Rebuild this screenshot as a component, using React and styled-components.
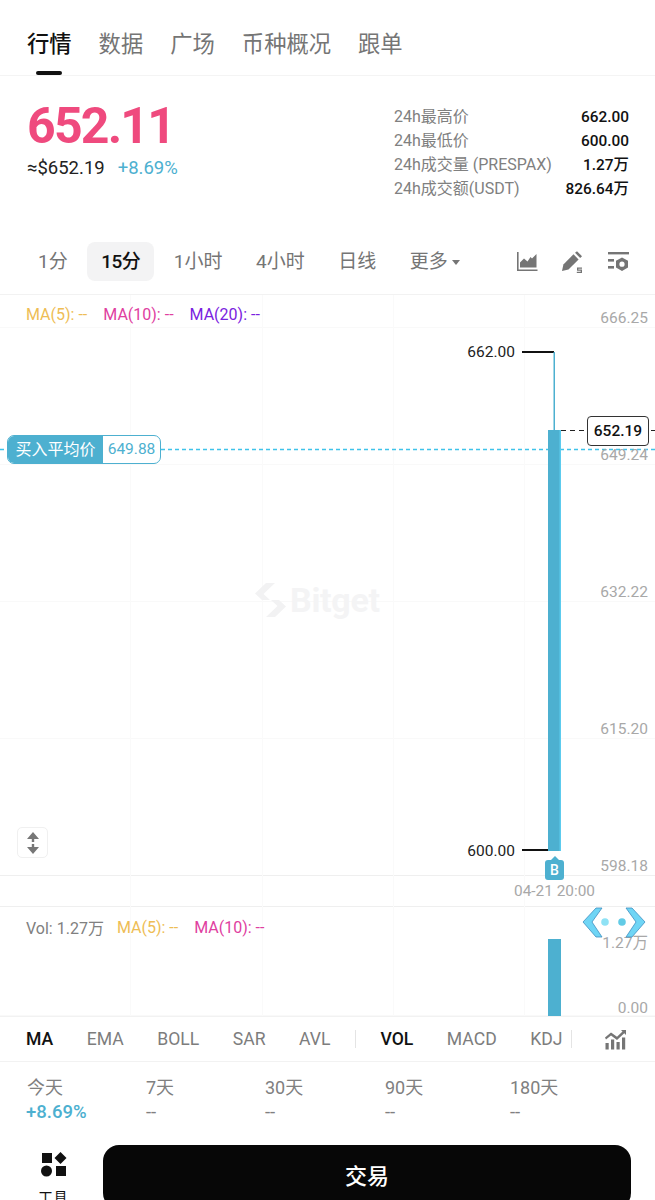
import React from "react";
import styled, { createGlobalStyle } from "styled-components";

const FONT = `Roboto, "Noto Sans CJK SC", "Noto Sans", sans-serif`;
const TEAL = "#4db0d0";
const TOP = 294;

const Global = createGlobalStyle`
  html, body { margin: 0; padding: 0; background: #fff; }
  body { width: 655px; height: 1200px; overflow: hidden; font-family: ${FONT}; }
  * { box-sizing: border-box; }
`;

const Page = styled.div`
  width: 655px;
  height: 1200px;
  overflow: hidden;
  display: flex;
  flex-direction: column;
  background: #fff;
`;

const TabBar = styled.nav`
  height: 76px;
  padding: 25px 0 0 27px;
  display: flex;
  gap: 27px;
  border-bottom: 1px solid #f4f4f4;
  flex: none;
`;
const Tab = styled.div`
  position: relative;
  font-size: 22.3px;
  line-height: 38px;
  height: 50px;
  color: ${(p) => (p.$active ? "#111" : "#757575")};
  font-weight: ${(p) => (p.$active ? 500 : 400)};
  ${(p) =>
    p.$active &&
    `&::after { content: ""; position: absolute; left: 9px; bottom: 0; width: 26px; height: 4px; border-radius: 2px; background: #111; }`}
`;

const Summary = styled.section`
  height: 165px;
  flex: none;
  display: flex;
  justify-content: space-between;
  padding: 29px 26px 0 27px;
`;
const PriceBlock = styled.div`
  display: flex;
  flex-direction: column;
`;
const BigPrice = styled.div`
  font-size: 50px;
  line-height: 46px;
  margin-top: -2px;
  font-weight: 700;
  color: #ef4a7e;
  letter-spacing: -1.8px;
`;
const PriceSub = styled.div`
  margin-top: 7px;
  display: flex;
  gap: 13px;
  font-size: 18.5px;
  line-height: 24px;
  color: #222;
`;
const Up = styled.span`
  color: ${TEAL};
`;
const Stats = styled.div`
  display: grid;
  grid-template-columns: 1fr auto;
  align-content: start;
  column-gap: 8px;
  width: 235px;
  font-size: 16px;
  line-height: 24px;
`;
const StatLabel = styled.span`
  color: #808080;
  white-space: nowrap;
`;
const StatValue = styled.span`
  color: #111;
  font-size: 15.4px;
  font-weight: 500;
  text-align: right;
  white-space: nowrap;
`;

const Intervals = styled.div`
  height: 53px;
  flex: none;
  padding: 1px 26px 0 24px;
  display: flex;
  align-items: flex-start;
  gap: 5.5px;
`;
const Interval = styled.div`
  height: 39px;
  line-height: 39px;
  padding: 0 14px;
  border-radius: 8px;
  font-size: 19px;
  color: ${(p) => (p.$active ? "#111" : "#757575")};
  font-weight: ${(p) => (p.$active ? 500 : 400)};
  letter-spacing: ${(p) => (p.$active ? "-0.5px" : "0")};
  background: ${(p) => (p.$active ? "#f3f3f4" : "transparent")};
  white-space: nowrap;
`;
const Caret = styled.span`
  display: inline-block;
  margin-left: 4px;
  vertical-align: 3px;
  border-left: 4.5px solid transparent;
  border-right: 4.5px solid transparent;
  border-top: 5px solid #757575;
`;
const ToolIcons = styled.div`
  margin-left: auto;
  height: 39px;
  display: flex;
  align-items: center;
  gap: 23px;
`;

const Canvas = styled.div`
  position: relative;
  height: 722px;
  flex: none;
  border-top: 1px solid #f2f2f2;
  overflow: hidden;
`;
const Drawing = styled.svg`
  position: absolute;
  left: 0;
  top: -1px;
`;
const Legend = styled.div`
  position: absolute;
  left: 26px;
  top: ${(p) => p.$y - TOP - 1}px;
  height: 20px;
  display: flex;
  align-items: center;
  gap: 16px;
  font-size: 16px;
  white-space: nowrap;
`;
const LegendItem = styled.span`
  color: ${(p) => p.$color};
  margin-right: ${(p) => (p.$tight ? "-3px" : "0")};
`;
const AxisLabel = styled.div`
  position: absolute;
  right: 7px;
  top: ${(p) => p.$y - TOP - 10}px;
  line-height: 20px;
  font-size: 15.5px;
  color: #a8a8a8;
  white-space: nowrap;
`;
const TimeLabel = styled.div`
  position: absolute;
  left: 514px;
  top: ${891 - TOP - 11}px;
  line-height: 20px;
  font-size: 15.4px;
  color: #a8a8a8;
  white-space: nowrap;
`;
const ExtremeLabel = styled.div`
  position: absolute;
  right: 140px;
  top: ${(p) => p.$y - TOP - 11}px;
  line-height: 20px;
  font-size: 15.5px;
  color: #222;
`;
const LastPrice = styled.div`
  position: absolute;
  left: 587px;
  top: ${416 - TOP - 1}px;
  width: 62px;
  height: 30px;
  line-height: 28px;
  text-align: center;
  background: #fff;
  border: 1px solid #333;
  border-radius: 4px;
  font-size: 15.5px;
  font-weight: 500;
  color: #111;
`;
const AvgTag = styled.div`
  position: absolute;
  left: 7px;
  top: ${435 - TOP - 1}px;
  width: 154px;
  height: 29px;
  display: flex;
  border: 1px solid ${TEAL};
  border-radius: 7px;
  overflow: hidden;
  background: #fff;
  font-size: 16px;
  line-height: 27px;
`;
const AvgName = styled.span`
  width: 95px;
  background: ${TEAL};
  color: #fff;
  text-align: center;
`;
const AvgValue = styled.span`
  flex: 1;
  color: ${TEAL};
  font-size: 15.5px;
  text-align: center;
`;
const ScaleButton = styled.div`
  position: absolute;
  left: 17px;
  top: ${827 - TOP - 1}px;
  width: 31px;
  height: 31px;
  border: 1px solid #f0f0f0;
  border-radius: 5px;
  display: flex;
  align-items: center;
  justify-content: center;
  background: #fff;
`;
const BuyMark = styled.div`
  position: absolute;
  left: 545px;
  top: ${860 - TOP - 1}px;
  width: 19px;
  height: 20px;
  background: ${TEAL};
  border-radius: 3px;
  color: #fff;
  font-size: 14px;
  font-weight: 500;
  line-height: 20px;
  text-align: center;
  &::before {
    content: "";
    position: absolute;
    left: 5.5px;
    top: -4px;
    border-left: 4px solid transparent;
    border-right: 4px solid transparent;
    border-bottom: 4px solid ${TEAL};
  }
`;
const Watermark = styled.div`
  position: absolute;
  left: 255px;
  top: ${582 - TOP - 1}px;
  height: 36px;
  display: flex;
  align-items: center;
  gap: 4px;
  font-size: 34px;
  font-weight: 700;
  color: #f4f4f5;
  letter-spacing: -0.3px;
`;
const Floater = styled.svg`
  position: absolute;
  left: 582px;
  top: ${906 - TOP - 1}px;
`;

const Indicators = styled.div`
  height: 46px;
  flex: none;
  padding-left: 26px;
  display: flex;
  align-items: center;
  gap: 33.5px;
  border-top: 1px solid #f2f2f2;
  border-bottom: 1px solid #f2f2f2;
`;
const Indicator = styled.span`
  font-size: 17.6px;
  color: ${(p) => (p.$active ? "#111" : "#7d7d7d")};
  font-weight: ${(p) => (p.$active ? 500 : 400)};
`;
const Divider = styled.i`
  width: 1px;
  height: 18px;
  background: #e4e4e4;
  margin-left: ${(p) => p.$left}px;
  margin-right: ${(p) => p.$right}px;
`;

const Periods = styled.div`
  height: 83px;
  flex: none;
  padding: 14px 0 0 27px;
  display: grid;
  grid-template-columns: 119px 119px 120px 125px auto;
`;
const Period = styled.div`
  display: flex;
  flex-direction: column;
`;
const PeriodName = styled.span`
  font-size: 18px;
  line-height: 24px;
  color: #808080;
`;
const PeriodValue = styled.span`
  font-size: 18.5px;
  line-height: 24px;
  color: ${(p) => (p.$up ? TEAL : "#808080")};
  font-weight: ${(p) => (p.$up ? 500 : 400)};
  margin-left: ${(p) => (p.$up ? "-1px" : "0")};
`;

const Footer = styled.div`
  height: 70px;
  flex: none;
  display: flex;
  padding-left: 38px;
`;
const ToolEntry = styled.div`
  width: 65px;
  padding-top: 7px;
  display: flex;
  flex-direction: column;
  align-items: flex-start;
  gap: 11px;
  font-size: 15px;
  line-height: 20px;
  color: #111;
`;
const ToolGlyph = styled.svg`
  margin-left: 3px;
  flex: none;
`;
const TradeButton = styled.div`
  width: 528px;
  height: 64px;
  background: #070707;
  color: #fff;
  border-radius: 16px;
  font-size: 22px;
  font-weight: 500;
  line-height: 64px;
  text-align: center;
`;

const AreaIcon = () => (
  <svg width="22" height="21" viewBox="0 0 22 21" fill="#757575">
    <path d="M1 1h1.6v17.4H21.5V20H1z" />
    <path d="M4 16.5v-5l4-4 3.5 3 3-4.5 1.5 1.5L20.5 3v13.5z" />
  </svg>
);
const PenIcon = () => (
  <svg width="24" height="22" viewBox="0 0 24 22" fill="#757575">
    <path d="M1 20l1.4-6.6L12.5 3.300 17.600 8.400 7.500 18.500z" />
    <path d="M14 1.800l2-1.600 5 5-1.800 1.800z" />
    <path d="M16 16.500h5v1.300h-3.700v.8H21V22h-5.200v-1.300h3.900v-.9H16z" />
  </svg>
);
const SettingsIcon = () => (
  <svg width="21" height="21" viewBox="0 0 21 21" fill="#757575">
    <rect x="0" y="1" width="21" height="2.400" />
    <rect x="0" y="8" width="6" height="2.600" />
    <rect x="0" y="15" width="6" height="2.600" />
    <path fillRule="evenodd" d="M14 6.500l6 3.300v6.800l-6 3.400-6-3.400V9.800zM14 10.600a2.600 2.600 0 1 0 0 5.200 2.600 2.600 0 0 0 0-5.200z" />
  </svg>
);
const ScaleIcon = () => (
  <svg width="14" height="22" viewBox="0 0 14 22" fill="#777">
    <path d="M7 0l6 7H8.200v3H5.800V7H1z" />
    <path d="M7 22l6-7H8.200v-3H5.800v3H1z" />
  </svg>
);
const ChartBarsIcon = () => (
  <svg width="21" height="21" viewBox="0 0 21 21" fill="#757575">
    <rect x="0.500" y="14" width="3.200" height="6.500" />
    <rect x="6" y="10.500" width="3.200" height="10" />
    <rect x="11.500" y="13" width="3.200" height="7.500" />
    <rect x="17" y="8.500" width="3.200" height="12" />
    <path d="M0 8.500l6-5 6 4.300 5.500-5.300-1.500-1.500H21v5l-1.700-1.700L12 11 6 6.500 1 10.500z" />
  </svg>
);
const LogoMark = () => (
  <svg width="31" height="34" viewBox="0 0 31 34" fill="#f2f2f3">
    <path d="M11 0h9L8.500 11 15 17H7L0 10.500z" />
    <path d="M20 34h-9l11.500-11L16 17h8l7 6.500z" />
  </svg>
);

const GRID_H = [327, 464, 601, 738, 875, 906, 1015];
const GRID_V = [130, 262, 393, 524];

const ChartDrawing = () => (
  <Drawing width="655" height="723" viewBox={`0 ${TOP} 655 723`}>
    {GRID_H.map((y) => (
      <line key={y} x1="0" x2="655" y1={y + 0.5} y2={y + 0.5} stroke={y === 875 || y === 906 ? "#efefef" : "#f9f9f9"} />
    ))}
    {GRID_V.map((x) => (
      <line key={x} x1={x + 0.5} x2={x + 0.5} y1="295" y2="1016" stroke="#fafafa" />
    ))}
    <line x1="0" x2="655" y1="449.500" y2="449.500" stroke="#3fc3ea" strokeWidth="1.500" strokeDasharray="4 3" />
    <line x1="561" x2="655" y1="430.500" y2="430.500" stroke="#222" strokeDasharray="5 4" />
    <line x1="522" x2="554" y1="352" y2="352" stroke="#111" strokeWidth="2" />
    <line x1="522" x2="554" y1="850" y2="850" stroke="#111" strokeWidth="2" />
    <rect x="553.500" y="352" width="1.500" height="80" fill={TEAL} />
    <rect x="548" y="430" width="13" height="421" fill={TEAL} />
    <rect x="559.500" y="430" width="1.500" height="421" fill="#5ccbee" />
    <rect x="548" y="939" width="13" height="78" fill={TEAL} />
  </Drawing>
);

const tabs = ["行情", "数据", "广场", "币种概况", "跟单"];
const intervals = ["1分", "15分", "1小时", "4小时", "日线"];
const stats = [
  ["24h最高价", "662.00"],
  ["24h最低价", "600.00"],
  ["24h成交量 (PRESPAX)", "1.27万"],
  ["24h成交额(USDT)", "826.64万"],
];
const axis = [
  ["666.25", 317],
  ["649.24", 454],
  ["632.22", 591],
  ["615.20", 728],
  ["598.18", 865],
  ["1.27万", 942],
  ["0.00", 1007],
];
const periods = [
  ["今天", "+8.69%", true],
  ["7天", "--"],
  ["30天", "--"],
  ["90天", "--"],
  ["180天", "--"],
];

export default function App() {
  return (
    <Page>
      <Global />
      <TabBar>
        {tabs.map((t, i) => (
          <Tab key={t} $active={i === 0}>{t}</Tab>
        ))}
      </TabBar>

      <Summary>
        <PriceBlock>
          <BigPrice>652.11</BigPrice>
          <PriceSub>
            <span>≈$652.19</span>
            <Up>+8.69%</Up>
          </PriceSub>
        </PriceBlock>
        <Stats>
          {stats.map(([k, v]) => (
            <React.Fragment key={k}>
              <StatLabel>{k}</StatLabel>
              <StatValue>{v}</StatValue>
            </React.Fragment>
          ))}
        </Stats>
      </Summary>

      <Intervals>
        {intervals.map((t, i) => (
          <Interval key={t} $active={i === 1}>{t}</Interval>
        ))}
        <Interval>更多<Caret /></Interval>
        <ToolIcons>
          <AreaIcon />
          <PenIcon />
          <SettingsIcon />
        </ToolIcons>
      </Intervals>

      <Canvas>
        <ChartDrawing />
        <Watermark><LogoMark />Bitget</Watermark>
        <Legend $y={304}>
          <LegendItem $color="#eebd55">MA(5): --</LegendItem>
          <LegendItem $color="#e0409f">MA(10): --</LegendItem>
          <LegendItem $color="#7a22e0">MA(20): --</LegendItem>
        </Legend>
        {axis.map(([t, y]) => (
          <AxisLabel key={t} $y={y}>{t}</AxisLabel>
        ))}
        <ExtremeLabel $y={352}>662.00</ExtremeLabel>
        <ExtremeLabel $y={851}>600.00</ExtremeLabel>
        <LastPrice>652.19</LastPrice>
        <AvgTag>
          <AvgName>买入平均价</AvgName>
          <AvgValue>649.88</AvgValue>
        </AvgTag>
        <ScaleButton><ScaleIcon /></ScaleButton>
        <BuyMark>B</BuyMark>
        <TimeLabel>04-21 20:00</TimeLabel>
        <Legend $y={917}>
          <LegendItem $color="#808080" $tight>Vol: 1.27万</LegendItem>
          <LegendItem $color="#eebd55">MA(5): --</LegendItem>
          <LegendItem $color="#e0409f">MA(10): --</LegendItem>
        </Legend>
        <Floater width="64" height="33" viewBox="0 0 64 33">
          <path d="M14 2h6L10 16l10 15h-6L1 16z" fill="#6fd5f5" stroke="#3f8fc0" strokeWidth="0.800" />
          <path d="M50 2h-6l10 14-10 15h6l13-15z" fill="#6fd5f5" stroke="#3f8fc0" strokeWidth="0.800" />
          <circle cx="23" cy="16" r="3.800" fill="#8fe2f5" />
          <circle cx="40" cy="16" r="3.800" fill="#62cbe6" />
        </Floater>
      </Canvas>

      <Indicators>
        <Indicator $active>MA</Indicator>
        <Indicator>EMA</Indicator>
        <Indicator>BOLL</Indicator>
        <Indicator>SAR</Indicator>
        <Indicator>AVL</Indicator>
        <Divider $left={-9} $right={-9} />
        <Indicator $active>VOL</Indicator>
        <Indicator>MACD</Indicator>
        <Indicator>KDJ</Indicator>
        <Divider $left={-25} $right={-1} />
        <ChartBarsIcon />
      </Indicators>

      <Periods>
        {periods.map(([name, val, up]) => (
          <Period key={name}>
            <PeriodName>{name}</PeriodName>
            <PeriodValue $up={up}>{val}</PeriodValue>
          </Period>
        ))}
      </Periods>

      <Footer>
        <ToolEntry>
          <ToolGlyph width="26" height="25" viewBox="0 0 26 25" fill="#111">
            <rect x="1" y="1" width="10" height="10" />
            <path d="M19.500 0l6 6-6 6-6-6z" />
            <circle cx="5.500" cy="19" r="5.500" />
            <rect x="15" y="14" width="10" height="10" />
          </ToolGlyph>
          工具
        </ToolEntry>
        <TradeButton>交易</TradeButton>
      </Footer>
    </Page>
  );
}
